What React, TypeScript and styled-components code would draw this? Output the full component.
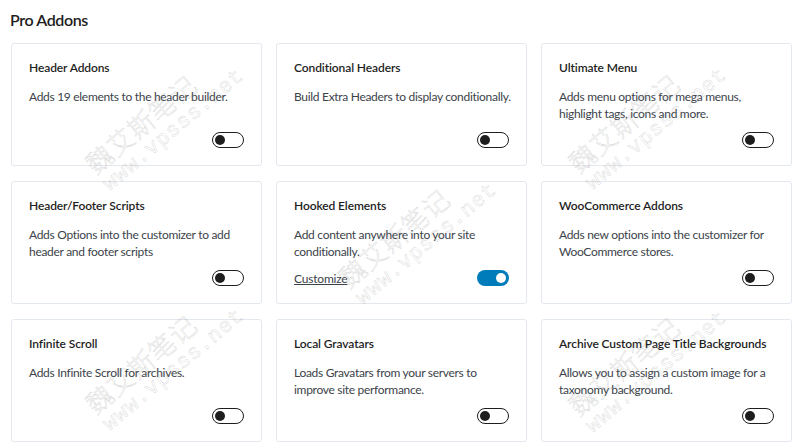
import React from "react";
import styled, { createGlobalStyle } from "styled-components";

const Global = createGlobalStyle`
  html, body { margin: 0; padding: 0; background: #ffffff; }
  body { font-family: Lato, "Noto Sans", Arial, sans-serif; color: #1e1e1e; }
  * { box-sizing: border-box; }
`;

const Page = styled.div`
  position: relative;
  width: 800px;
  height: 448px;
  overflow: hidden;
  padding: 9px 8px 0 11px;
`;

const Heading = styled.h2`
  margin: 0 0 12px -1px;
  font-size: 16px;
  line-height: 22px;
  font-weight: 600;
  letter-spacing: -0.4px;
  color: #1e1e1e;
`;

const Grid = styled.div`
  display: grid;
  grid-template-columns: repeat(3, 251px);
  grid-auto-rows: 123px;
  column-gap: 14px;
  row-gap: 15px;
`;

const Card = styled.div`
  display: flex;
  flex-direction: column;
  background: #fff;
  border: 1px solid #e3e7ee;
  border-radius: 3px;
  padding: 16px 14px 17px 17px;
`;

const Title = styled.div`
  font-size: 12px;
  line-height: 16px;
  font-weight: 600;
  letter-spacing: -0.1px;
  color: #1e1e1e;
`;

const Desc = styled.p`
  margin: 12px 0 0;
  font-size: 12px;
  line-height: 17px;
  letter-spacing: -0.3px;
  color: #3c434a;
`;

const Footer = styled.div`
  margin-top: auto;
  display: flex;
  align-items: center;
  justify-content: space-between;
  height: 16px;
  padding-right: 3px;
`;

const Link = styled.a`
  font-size: 12px;
  letter-spacing: -0.2px;
  color: #3c434a;
  text-decoration: underline;
`;

const Toggle = styled.span<{ $on?: boolean }>`
  margin-left: auto;
  position: relative;
  display: inline-block;
  width: 32px;
  height: 16px;
  border-radius: 8px;
  border: ${(p) => (p.$on ? "none" : "1.5px solid #1e1e1e")};
  background: ${(p) => (p.$on ? "#007cba" : "#fff")};
  &::after {
    content: "";
    position: absolute;
    top: ${(p) => (p.$on ? "3px" : "1.5px")};
    left: ${(p) => (p.$on ? "19px" : "1.5px")};
    width: 10px;
    height: 10px;
    border-radius: 50%;
    background: ${(p) => (p.$on ? "#fff" : "#1e1e1e")};
  }
`;

const Mark = styled.div`
  position: absolute;
  transform: rotate(-40deg);
  transform-origin: left top;
  color: transparent;
  -webkit-text-stroke: 0.5px rgba(140, 140, 140, 0.35);
  font-family: "Noto Sans CJK SC", "Noto Sans", sans-serif;
  font-weight: 300;
  pointer-events: none;
  line-height: 1.1;
  white-space: nowrap;
`;

const MarkCn = styled.div`
  font-size: 26px;
  letter-spacing: 1px;
`;

const MarkEn = styled.div`
  font-size: 21px;
  font-family: "Liberation Mono", monospace;
  letter-spacing: 1px;
`;

type Addon = { title: string; desc: string; on?: boolean; link?: string };

const addons: Addon[] = [
  { title: "Header Addons", desc: "Adds 19 elements to the header builder." },
  { title: "Conditional Headers", desc: "Build Extra Headers to display conditionally." },
  { title: "Ultimate Menu", desc: "Adds menu options for mega menus, highlight tags, icons and more." },
  { title: "Header/Footer Scripts", desc: "Adds Options into the customizer to add header and footer scripts" },
  { title: "Hooked Elements", desc: "Add content anywhere into your site conditionally.", on: true, link: "Customize" },
  { title: "WooCommerce Addons", desc: "Adds new options into the customizer for WooCommerce stores." },
  { title: "Infinite Scroll", desc: "Adds Infinite Scroll for archives." },
  { title: "Local Gravatars", desc: "Loads Gravatars from your servers to improve site performance." },
  { title: "Archive Custom Page Title Backgrounds", desc: "Allows you to assign a custom image for a taxonomy background." },
];

const marks = [
  { x: 80, y: 156 },
  { x: 333, y: 270 },
  { x: 563, y: 155 },
  { x: 80, y: 396 },
  { x: 563, y: 398 },
];

export default function App() {
  return (
    <Page>
      <Global />
      <Heading>Pro Addons</Heading>
      <Grid>
        {addons.map((a) => (
          <Card key={a.title}>
            <Title>{a.title}</Title>
            <Desc>{a.desc}</Desc>
            <Footer>
              {a.link && <Link href="#">{a.link}</Link>}
              <Toggle $on={a.on} />
            </Footer>
          </Card>
        ))}
      </Grid>
      {marks.map((m, i) => (
        <Mark key={i} style={{ left: m.x, top: m.y }}>
          <MarkCn>魏艾斯笔记</MarkCn>
          <MarkEn>www.vpsss.net</MarkEn>
        </Mark>
      ))}
    </Page>
  );
}
